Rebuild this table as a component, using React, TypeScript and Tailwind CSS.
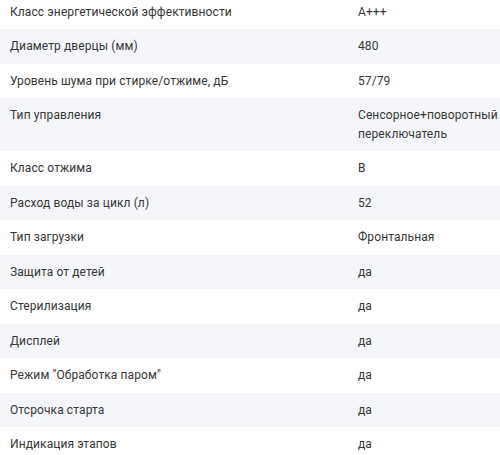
const specs: [string, string][] = [
  ['Класс энергетической эффективности', 'A+++'],
  ['Диаметр дверцы (мм)', '480'],
  ['Уровень шума при стирке/отжиме, дБ', '57/79'],
  ['Тип управления', 'Сенсорное+поворотный переключатель'],
  ['Класс отжима', 'B'],
  ['Расход воды за цикл (л)', '52'],
  ['Тип загрузки', 'Фронтальная'],
  ['Защита от детей', 'да'],
  ['Стерилизация', 'да'],
  ['Дисплей', 'да'],
  ['Режим "Обработка паром"', 'да'],
  ['Отсрочка старта', 'да'],
  ['Индикация этапов', 'да'],
]

export default function App() {
  return (
    <div className="h-[455px] w-[500px] overflow-hidden bg-white font-['Roboto',sans-serif] text-[12px] leading-[18.5px] tracking-[0.1px] text-[#363636]">
      <div className="-mt-[5.5px]">
        {specs.map(([label, value], i) => (
          <div
            key={label}
            className={`grid grid-cols-[348px_1fr] py-2 ${i % 2 === 1 ? 'bg-[#f5f6fa]' : 'bg-white'}`}
          >
            <div className="pl-[10px]">{label}</div>
            <div className="pl-[10px]">{value}</div>
          </div>
        ))}
      </div>
    </div>
  )
}
